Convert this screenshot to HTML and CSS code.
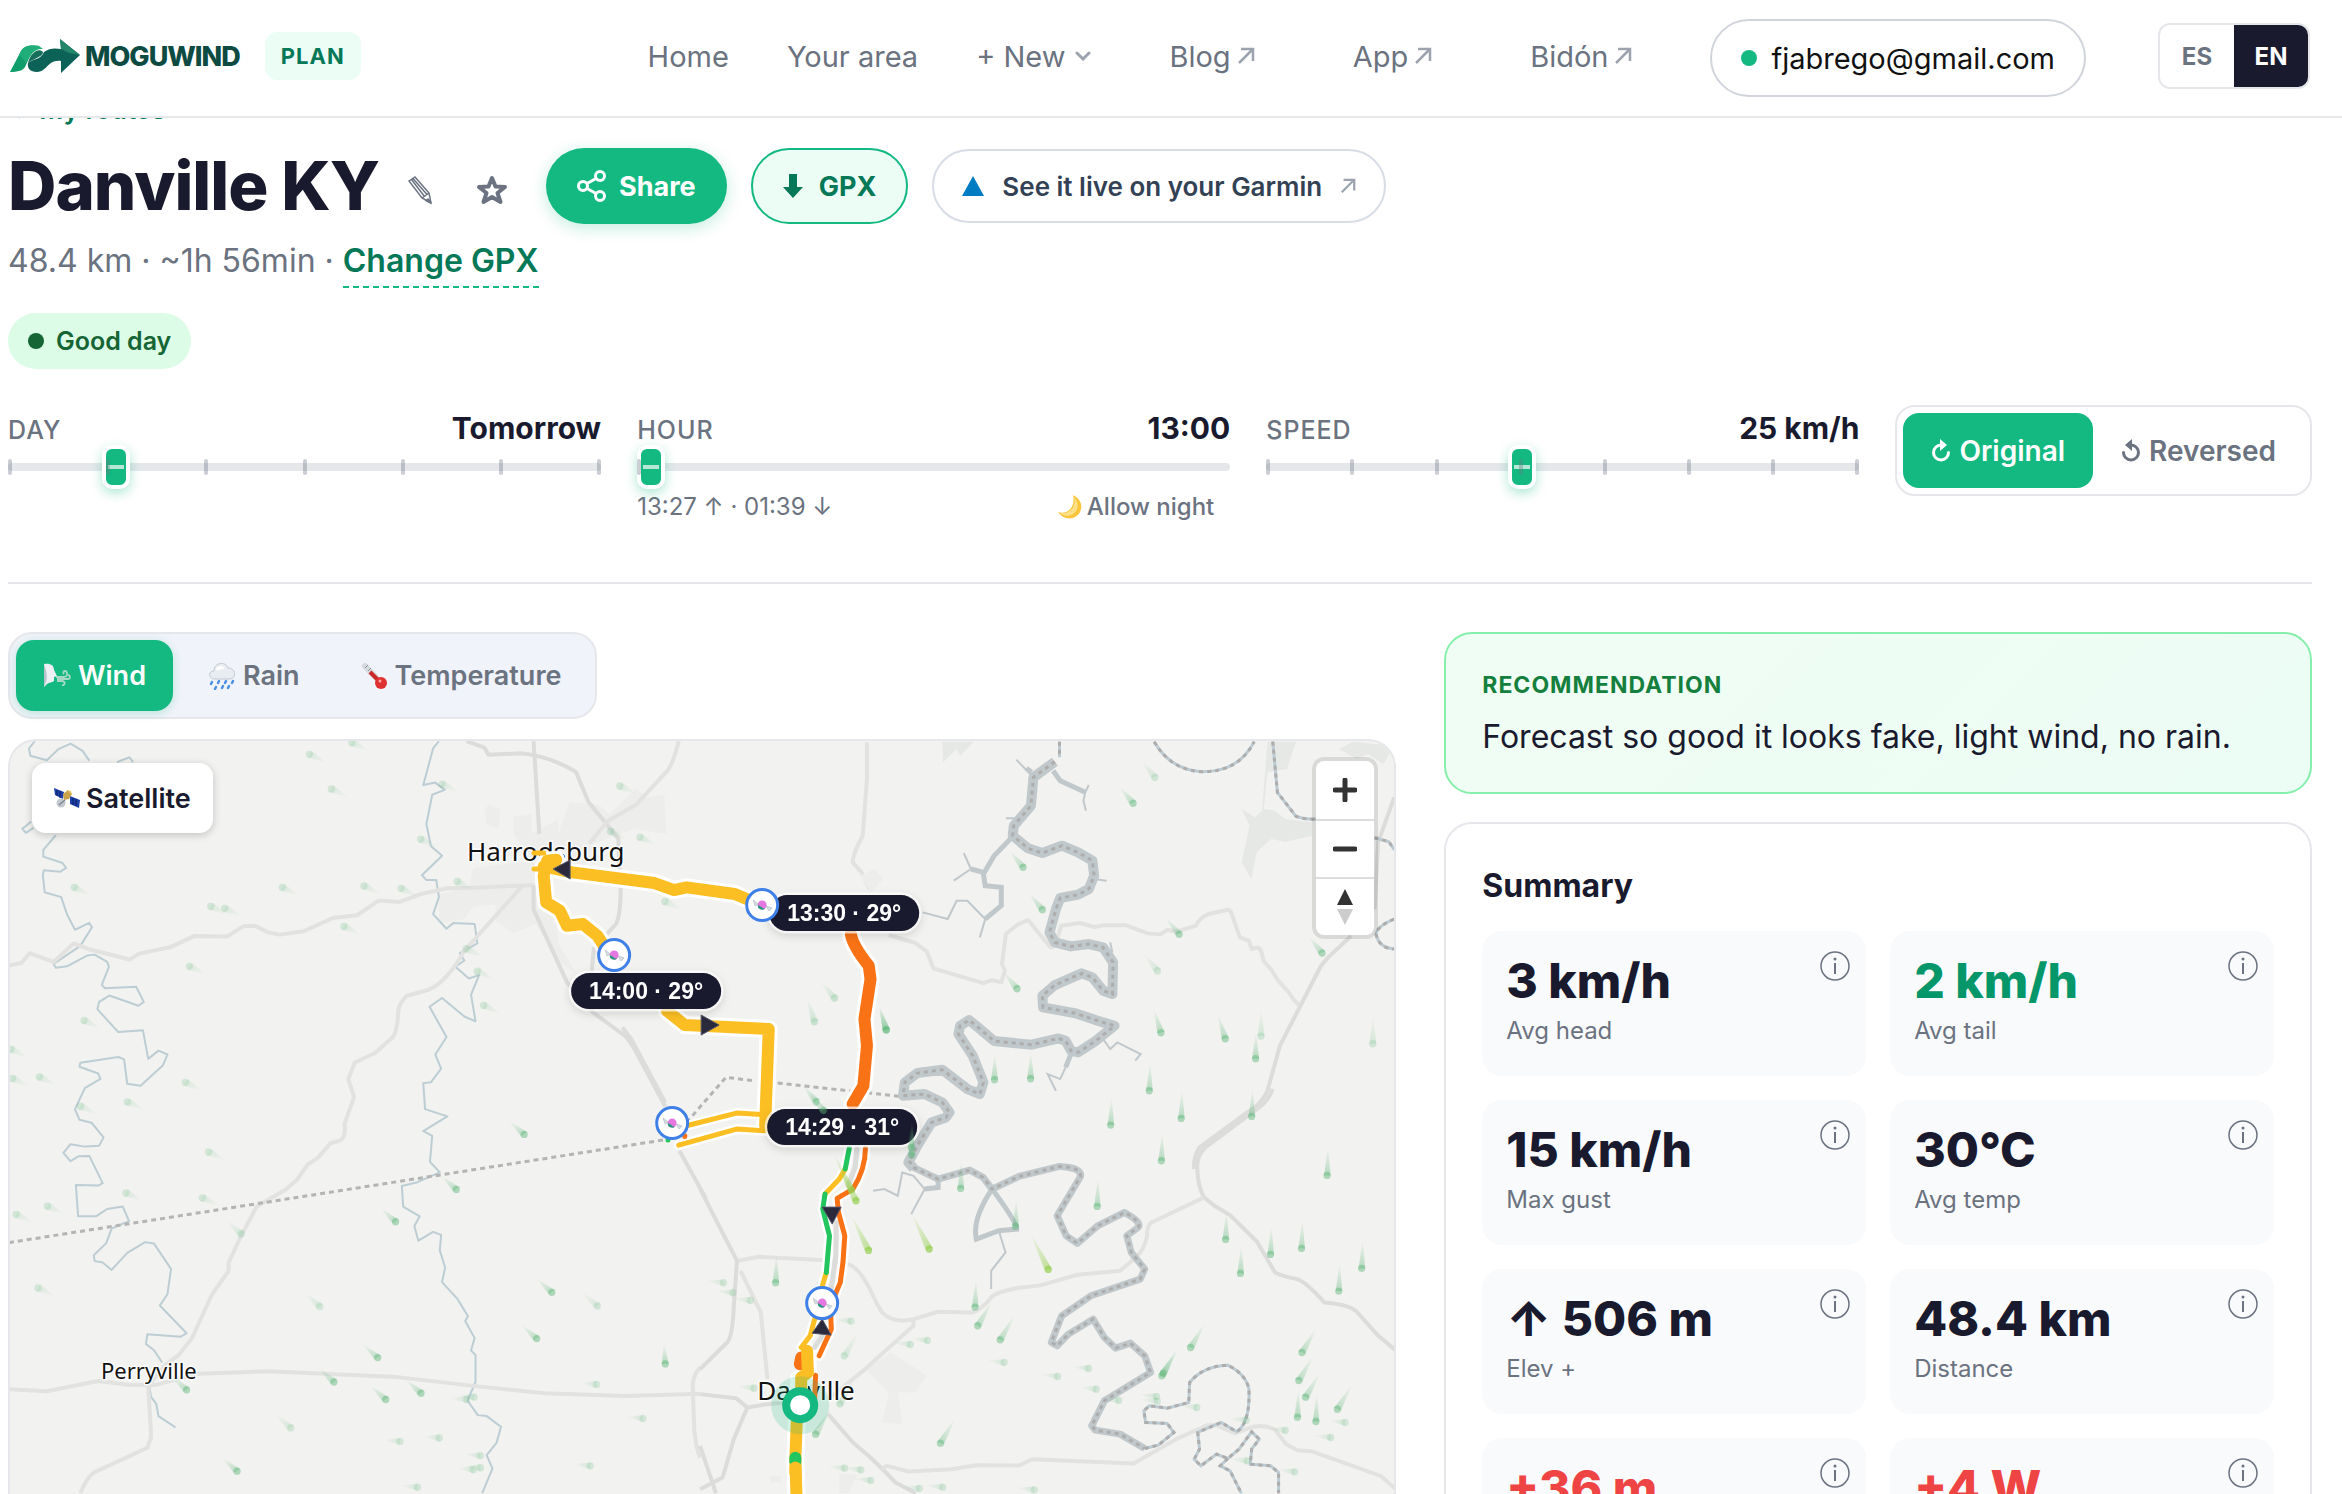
FILE: index.html
```html
<!DOCTYPE html>
<html lang="en">
<head>
<meta charset="utf-8">
<title>Danville KY - Moguwind Plan</title>
<link rel="stylesheet" href="styles.css">
</head>
<body>
<svg class="defs" aria-hidden="true">
  <symbol id="i-out" viewBox="0 0 18 18"><path d="M2 16 16 2M4 2h12v12" fill="none" stroke="currentColor" stroke-width="2.500"/></symbol>
  <symbol id="i-info" viewBox="0 0 30 30"><circle cx="15" cy="15" r="14" fill="none" stroke="currentColor" stroke-width="1.500"/><circle cx="15" cy="8" r="1.500" fill="currentColor"/><path d="M15 12v11" fill="none" stroke="currentColor" stroke-width="2"/></symbol>
</svg>

<header class="topbar">
  <a class="brand" href="#">
    <svg class="brand-mark" viewBox="0 0 70 34" aria-hidden="true">
      <path d="M0 33 11 12C14 7 18 6 30 7 22 9 20 17 16 26 14 31 10 33 0 33Z" fill="#0f9d6b"/>
      <path d="M11 12C14 7 20 5 29 7l4 3C24 9 21 16 16 24 12 18 10 17 9 16Z" fill="#1fae79"/>
      <path d="M18 24C20 15 28 8 33 13 33 18 24 19 18 24Z" fill="#176f5b"/>
      <path d="M18 24C22 20 31 21 34 13 39 9 45 9 51 10L50 0 70 16 51 34 51 22C38 20 37 33 27 33 20 33 17 29 18 24Z" fill="#0c6257"/>
      <path d="M50 0 70 16 59 14 51 10Z" fill="#23866a"/>
    </svg>
    <span class="brand-name">MOGUWIND</span>
  </a>
  <span class="chip">PLAN</span>
  <nav class="nav">
    <a href="#">Home</a>
    <a href="#">Your area</a>
    <a href="#" class="with-icon menu">+ New <svg viewBox="0 0 16 10" width="16" height="10"><path d="M2 2l6 6 6-6" fill="none" stroke="#9ca3af" stroke-width="3" stroke-linecap="round"/></svg></a>
    <a href="#" class="with-icon ext">Blog<svg width="18" height="18"><use href="#i-out"/></svg></a>
    <a href="#" class="with-icon ext">App<svg width="18" height="18"><use href="#i-out"/></svg></a>
    <a href="#" class="with-icon ext">Bidón<svg width="18" height="18"><use href="#i-out"/></svg></a>
    <button class="account" type="button"><span class="dot"></span>fjabrego@gmail.com</button>
  </nav>
  <div class="lang"><button type="button">ES</button><button type="button" class="on">EN</button></div>
</header>

<main class="page">
  <a class="back" href="#">← My routes</a>
  <div class="title-row">
    <h1>Danville KY</h1>
    <button class="icon-btn" type="button" aria-label="Rename"><svg viewBox="0 0 26 30" width="26" height="30" fill="none" stroke="#6b7280" stroke-width="1.5"><path d="M2 6 8 2 22 18 24 28 15 23ZM15 23 22 18M4.500 4.500 17.500 21.500M6 3.500 20 19.500"/><path d="M21 24 24 28 19 25.500Z" fill="#6b7280"/></svg></button>
    <button class="icon-btn star" type="button" aria-label="Favourite"><svg viewBox="0 0 34 32" width="34" height="32"><path d="M17 4 20.500 12.500 30 13 22.500 19 25.500 28 17 23 8.500 28 11.500 19 4 13 13.500 12.500Z" fill="none" stroke="#6b7280" stroke-width="4" stroke-linejoin="round"/></svg></button>
    <button class="btn share" type="button"><svg viewBox="0 0 30 32" width="30" height="32" fill="none" stroke="#fff" stroke-width="3"><circle cx="23" cy="6" r="4.500"/><circle cx="6" cy="16" r="4.500"/><circle cx="23" cy="26" r="4.500"/><path d="M10 13.500 19 8.500M10 18.500 19 23.500"/></svg>Share</button>
    <button class="btn gpx" type="button"><svg viewBox="0 0 20 26" width="20" height="26"><path d="M6 1h8v13h6L10 25 0 14h6Z" fill="#047857"/></svg>GPX</button>
    <a class="btn garmin" href="#"><svg viewBox="0 0 22 20" width="22" height="20"><path d="M11 0 22 20H0Z" fill="#007cc3"/></svg>See it live on your Garmin<svg class="out" width="16" height="16"><use href="#i-out"/></svg></a>
  </div>
  <p class="sub">48.4 km · ~1h 56min · <a href="#">Change GPX</a></p>
  <p class="verdict"><span class="dot"></span>Good day</p>

  <section class="controls">
    <div class="control">
      <div class="control-head"><label for="day">DAY</label><output>Tomorrow</output></div>
      <div class="slider"><input id="day" type="range" min="0" max="6" value="1"><div class="ticks"><i></i><i></i><i></i><i></i><i></i><i></i><i></i></div></div>
    </div>
    <div class="control">
      <div class="control-head"><label for="hour">HOUR</label><output>13:00</output></div>
      <div class="slider"><input id="hour" type="range" min="13" max="25" value="13"><div class="ticks"><i></i></div></div>
      <div class="control-foot"><span>13:27 ↑ · 01:39 ↓</span><button type="button"><svg viewBox="0 0 26 26" width="26" height="26"><path d="M16 1C24 5 26 12 23 18 19 26 7 27 1 18 9 21 19 15 16 1Z" fill="#fbc53a"/><path d="M17 3C22 8 22 16 16 20 11 23 6 22 3 19 11 21 20 14 17 3Z" fill="#fde08a"/></svg>Allow night</button></div>
    </div>
    <div class="control">
      <div class="control-head"><label for="speed">SPEED</label><output>25 km/h</output></div>
      <div class="slider"><input id="speed" type="range" min="0" max="7" value="3"><div class="ticks"><i></i><i></i><i></i><i></i><i></i><i></i><i></i><i></i></div></div>
    </div>
    <div class="direction">
      <button type="button" class="on"><svg viewBox="0 0 20 24" width="20" height="24"><path d="M17.500 13.500A7.500 7.500 0 1 1 10 6" fill="none" stroke="currentColor" stroke-width="3" stroke-linecap="round"/><path d="M9 0 16 6 9 12Z" fill="currentColor"/></svg>Original</button>
      <button type="button"><svg viewBox="0 0 20 24" width="20" height="24"><path d="M2.500 13.500A7.500 7.500 0 1 0 10 6" fill="none" stroke="currentColor" stroke-width="3" stroke-linecap="round"/><path d="M11 0 4 6 11 12Z" fill="currentColor"/></svg>Reversed</button>
    </div>
  </section>

  <div class="columns">
    <section class="map-col">
      <div class="tabs">
        <button type="button" class="on"><svg viewBox="0 0 28 28" width="28" height="28"><path d="M1 2C7 1 11 3 11 8L14 14 11 15V19C9 21 6 20 4 22L1 25Z" fill="#eef1f4"/><path d="M1 2C3 8 5 14 3 20L1 25Z" fill="#b9c3cc"/><path d="M13 15H21C25 15 25 9 22 9 20 9 20 11 21 12M14 17H25C28 17 27 13 25 13M14 19H19C23 19 22 24 19 23" fill="none" stroke="#a5d8c5" stroke-width="1.800"/></svg>Wind</button>
        <button type="button"><svg viewBox="0 0 28 28" width="28" height="28"><path d="M7 17C0 17 0 9 6 9 6 0 18-1 20 6 28 6 29 17 21 17Z" fill="#e9ecf0" stroke="#c3c9d1"/><path d="M8 8C9 3 15 3 17 7 12 6 12 9 8 8Z" fill="#fff"/><path d="M4 20l-1 2M11 19l-1 2M18 19l-1 2M25 19l-1 2M8 25l-1 2M15 24l-1 2M21 24l-1 2" stroke="#4a90e2" stroke-width="2.500" stroke-linecap="round"/></svg>Rain</button>
        <button type="button"><svg viewBox="0 0 26 28" width="26" height="28"><path d="M3 4 17 19" stroke="#d5dade" stroke-width="6" stroke-linecap="round"/><path d="M3 6 6 3M6 9 9 6" stroke="#8b939b"/><path d="M8 10 19 21" stroke="#c92a2a" stroke-width="4"/><circle cx="19" cy="21" r="6" fill="#e03131"/><circle cx="18" cy="19" r="1.500" fill="#ffa8a8"/></svg>Temperature</button>
      </div>

      <div class="map">
        <svg class="map-art" viewBox="10 742 1384 860" preserveAspectRatio="xMidYMin slice">
          <defs>
            <linearGradient id="t-up" x1="0" y1="1" x2="0" y2="0"><stop offset="0" stop-color="#5cb578" stop-opacity=".4"/><stop offset="1" stop-color="#5cb578" stop-opacity="0"/></linearGradient>
            <linearGradient id="t-nw" x1="1" y1="1" x2="0" y2="0"><stop offset="0" stop-color="#5cb578" stop-opacity=".4"/><stop offset="1" stop-color="#5cb578" stop-opacity="0"/></linearGradient>
            <linearGradient id="t-ne" x1="0" y1="1" x2="1" y2="0"><stop offset="0" stop-color="#5cb578" stop-opacity=".4"/><stop offset="1" stop-color="#5cb578" stop-opacity="0"/></linearGradient>
            <linearGradient id="t-se" x1="0" y1="0" x2="1" y2="1"><stop offset="0" stop-color="#5cb578" stop-opacity=".4"/><stop offset="1" stop-color="#5cb578" stop-opacity="0"/></linearGradient>
            <linearGradient id="t-w" x1="1" y1="0" x2="0" y2="0"><stop offset="0" stop-color="#5cb578" stop-opacity=".4"/><stop offset="1" stop-color="#5cb578" stop-opacity="0"/></linearGradient>
            <linearGradient id="t-lime" x1="1" y1="1" x2="0" y2="0"><stop offset="0" stop-color="#95cf4e" stop-opacity=".6"/><stop offset="1" stop-color="#95cf4e" stop-opacity="0"/></linearGradient>
            <g id="w-se" opacity=".45"><path d="M-4 7 38 17 5-7Z" fill="url(#t-se)"/><ellipse rx="8" ry="7.500" class="g"/></g>
            <g id="w-nw"><path d="M-7 4-34-28 6-5Z" fill="url(#t-nw)"/><ellipse rx="8" ry="7.500" class="g"/></g>
            <g id="w-n"><path d="M-8 0-3-42 8 0Z" fill="url(#t-up)"/><ellipse rx="8" ry="7.500" class="g"/></g>
            <g id="w-w" opacity=".45"><path d="M0 7-36-3 0-7Z" fill="url(#t-w)"/><ellipse rx="8" ry="7.500" class="g"/></g>
            <g id="s-n"><path d="M-7 0 2-85 8 0Z" fill="url(#t-up)"/><ellipse rx="8" ry="11" class="g"/></g>
            <g id="s-ne"><path d="M-7-4 33-75 8 4Z" fill="url(#t-ne)"/><ellipse rx="8" ry="11" class="g"/></g>
            <g id="s-w" opacity=".45"><path d="M0 10-38-6 0-10Z" fill="url(#t-w)"/><ellipse rx="8" ry="11" class="g"/></g>
            <g id="s-lime"><path d="M-8 2-40-110 8-3Z" fill="url(#t-lime)"/><ellipse rx="8" ry="11" fill="#95cf4e" opacity=".7"/></g>
            <g id="e-nw"><path d="M-10 3-38-50 9-6Z" fill="url(#t-nw)"/><ellipse rx="10" ry="11" class="g"/></g>
            <g id="e-nnw"><path d="M-10 2-20-72 10-3Z" fill="url(#t-up)"/><ellipse rx="10" ry="11" class="g"/></g>
            <g id="e-n"><path d="M-10 0 1-80 10 0Z" fill="url(#t-up)"/><ellipse rx="10" ry="11" class="g"/></g>
            <g id="candy"><circle r="15.500" fill="#fff" stroke="#3f7fe8" stroke-width="3"/><path d="M-4-1-9-5-7 1ZM4 1 10 3 7 6Z" fill="#d6dde0" stroke="#c2cbd0"/><circle r="4.500" fill="#e478e0"/><path d="M-4.500 0A4.500 4.500 0 0 0 3 3.500C0 4-1 1-4.500 0Z" fill="#1f9a78"/></g>
          </defs>

          <g transform="translate(0 730) scale(.4464 .4872)">
            <g class="urban"><path d="M1085 165 1095 155 1120 165 1118 205 1090 195ZM1150 180 1190 175 1190 215 1250 185V215L1275 150 1340 155 1365 175 1425 122 1450 140 1488 135 1492 215 1420 205 1330 235 1300 300 1210 290 1150 215ZM1060 285 1200 270 1240 330 1250 440 1290 500 1255 480 1200 400 1150 418 1110 395 1110 360 1060 365 1040 390 985 400 980 340 1050 325Z"/></g>
            <g class="creek">
              <path d="M78 25 65 40 68 55 105 64 130 42 158 30 185 45 200 65M262 68 290 58 298 68M70 190 50 205 58 213 75 203M125 218 97 248V262L140 275 148 285 135 293 98 290 96 300 100 335 137 345 150 380 168 412 200 398 206 407 180 445 120 482 125 490 150 487 195 465 212 463 240 478 244 488 228 525 235 532 305 529 322 560 310 568 245 547 222 560 218 575 265 622 320 618 332 677 355 660 375 668 365 690 315 732 285 728 278 678 265 673 180 685 178 693 220 707 225 718 190 737 168 780 178 802 205 808 232 838 222 855 190 857 158 852 142 870 158 887 175 877 200 876 230 932 220 937 170 936 175 1000 215 1000 240 985 275 980 289 1010 250 1025 238 1055 210 1080 212 1092 230 1095 250 1110 285 1075 325 1053 345 1056 383 1108 375 1160 358 1183 418 1240 405 1247 330 1242 327 1262 345 1275 363 1300M335 1350 338 1370 350 1385 355 1410 393 1433"/>
              <path d="M983 25 970 40 948 115 975 110 996 125 968 135 955 195 965 240 990 260 945 300 955 310 977 310 983 345 970 380 1000 410 1015 398 1063 400 1069 440 1030 460 1040 475 1020 488 1050 512 1073 505 1055 545 1065 600 1040 590 990 552 962 570 1000 632 975 668 988 697 965 725 948 727 952 780 1002 795 948 825 968 835 963 888 985 910 935 930 900 938 903 980 940 1000 928 1020 937 1050 970 1032 988 1038 985 1070 997 1105 990 1135 1025 1170 1048 1205 1042 1215 1063 1250 1055 1275 1065 1285V1340L1047 1378 1070 1408 1090 1410 1122 1432 1112 1465 1090 1490 1103 1518 1080 1568"/>
            </g>
            <g class="road">
              <path d="M20 485 48 480 66 460 120 478 165 440 200 452 290 473 312 461 380 448 435 425 508 426 545 405 572 404 600 417 626 422 680 415 745 388 800 382 848 352 895 355 945 338 1000 327 1060 326 1195 320"/>
              <path d="M1170 322 1040 455Q1000 520 960 535L910 548Q892 565 892 580 890 620 880 632L840 665 795 684 780 718 793 755 772 810Q775 840 760 845L740 850 712 880 690 893 665 925 640 945 575 980 540 1040 512 1095V1112L475 1160 430 1250 400 1285 370 1305 335 1345"/>
              <path d="M20 1355 105 1359 220 1338 290 1346H350L440 1323 600 1318 890 1330 1060 1348 1220 1363 1400 1369 1568 1364"/>
              <path d="M332 1350 338 1440V1455L330 1475 210 1526Q195 1535 180 1568"/>
              <path class="main" d="M1195 25 1208 215M1195 320V370L1270 520 1330 583 1400 630Q1410 640 1420 655L1490 775"/>
              <path class="main" d="M1045 25 1085 38 1094 53 1165 50Q1230 55 1290 88L1318 150 1385 225V240L1390 330Q1390 380 1380 400L1330 450 1325 500"/>
              <path d="M1520 25Q1505 80 1490 90L1425 155 1360 190 1320 235"/>
              <path d="M1568 1310Q1548 1330 1552 1360L1555 1440Q1560 1480 1568 1495"/>
            </g>
            <path class="border" d="M20 1054 1495 842"/>
          </g>

          <g transform="translate(440 780) scale(.35714 .33333)">
            <g class="road">
              <path d="M1195-110V0L1183 170Q1155 225 1155 250L1180 280 1202 330"/>
              <path class="main" d="M510 745 535 780 630 970M670 1115 745 1260"/>
            </g>
            <path class="border" d="M690 1030 800 895 880 905M945 912 1290 952"/>
          </g>

          <g transform="translate(860 730) scale(.35714 .33333)">
            <g class="park"><path d="M1140 38H1220L1195 120 1140 130 1130 240 1160 245 1190 270 1265 280V320L1190 338 1150 330 1110 370 1095 450 1068 400 1090 290 1068 240 1105 265 1125 245ZM1340 60 1380 38 1495 50 1465 105 1420 75 1390 90ZM230 38H318L280 80 270 60 232 100Z"/></g>
            <g class="urban"><path d="M0 440 40 420 65 450 30 490Z"/></g>
            <g class="road">
              <path d="M80 618 155 642 187 668 205 718 345 762 368 753 395 760 405 725 397 705 408 615 440 587 470 573 533 655 548 648 562 590 615 582 655 594 680 589H745L805 613 840 616 860 602 885 608 940 590Q950 565 975 555L1030 542Q1038 545 1040 555L1063 625 1088 635 1096 660 1115 655 1122 665 1130 697 1150 720 1170 755 1200 790Q1210 810 1228 828"/>
              <path class="main" d="M1495 205 1450 340 1440 540M1375 620 1310 685 1290 710 1175 950 1140 1085Q1130 1110 1105 1135L1070 1160 950 1255Q932 1285 935 1320"/>
            </g>
            <g class="arm">
              <path d="M540 125 560 155 630 190M480 130 465 118M425 325 375 380 345 435 350 470 395 475V530L350 570M345 430 310 420 M590 975 575 1015"/>
            </g>
            <g class="arm thin">
              <path d="M630 190 625 215 632 245M630 190 640 168M485 145 437 92M350 570 335 625M350 570 300 515H270L245 570 175 550M310 420 262 455M310 420 290 372M680 930 700 960 720 940 785 975 770 995M575 1015 560 1050 525 1035 548 1085M655 450 690 455M430 268H408M706 670 700 640"/>
            </g>
            <path class="river" d="M545 98 485 145 478 230 430 290 427 320 470 358 510 372 565 350 610 370 650 395 655 440 640 480 610 497 560 507 548 540 530 610 545 640 590 652 640 645 680 655 708 700 706 795 680 785 650 745 620 733 545 768 510 800 512 835 600 852 680 880 712 890 660 935 610 970 590 965 575 935 555 928 480 947 375 936 330 895 305 873 280 890 275 915 315 980 345 1060 335 1095 300 1080 230 1022 160 1032 125 1060 120 1100 180 1095 230 1120 250 1150 240 1165 200 1180 160 1250 135 1300 150 1318"/>
            <path class="river-mid" d="M545 98 485 145 478 230 430 290 427 320 470 358 510 372 565 350 610 370 650 395 655 440 640 480 610 497 560 507 548 540 530 610 545 640 590 652 640 645 680 655 708 700 706 795 680 785 650 745 620 733 545 768 510 800 512 835 600 852 680 880 712 890 660 935 610 970 590 965 575 935 555 928 480 947 375 936 330 895 305 873 280 890 275 915 315 980 345 1060 335 1095 300 1080 230 1022 160 1032 125 1060 120 1100 180 1095 230 1120 250 1150 240 1165 200 1180 160 1250 135 1300 150 1318"/>
            <path class="brook" d="M558 38V85M823 38Q870 125 960 128 1060 128 1103 38M1155 38 1168 190 1220 262Q1245 272 1276 270M1440 326 1480 338 1495 362M1495 570Q1440 595 1445 620 1455 658 1495 660"/>
            <path class="river-mid" d="M558 38V85M823 38Q870 125 960 128 1060 128 1103 38M1155 38 1168 190 1220 262Q1245 272 1276 270M1440 326 1480 338 1495 362M1495 570Q1440 595 1445 620 1455 658 1495 660"/>
          </g>

          <g transform="translate(700 1090) scale(.449 .33333)">
            <g class="urban"><path d="M370 840 425 790 505 860 480 910 440 910 450 1005 405 1000 420 910ZM155 1160H180V1180H155ZM310 1155H350L330 1212H310Z"/></g>
            <g class="road">
              <path class="main" d="M1275 0Q1265 35 1245 55L1125 175Q1105 200 1107 240 1108 290 1122 325L1145 350 1180 378 1240 458 1280 550Q1290 560 1330 570 1350 580 1390 640 1440 645 1460 665L1510 740 1559 795"/>
              <path d="M1122 325 1005 400Q995 410 995 440 990 480 970 505L935 545 840 557 760 588 700 598Q660 610 650 622 625 665 605 670L530 668 475 690Q430 705 405 670 395 650 385 620 360 545 335 528L300 515 130 503 85 515"/>
              <path class="main" d="M0 300 82 515 75 650Q72 745 60 760L0 840M0 915 80 927 105 955 150 945 225 935M105 955 75 1050 50 1165 0 1200M0 1070 35 1212"/>
              <path d="M90 545 135 670 150 870M475 690V710L400 800Q370 840 340 870L285 930"/>
              <path class="main" d="M285 975 340 1060 375 1100 410 1145 435 1180 480 1212"/>
              <path d="M405 1140 415 1130 465 1147 560 1140 615 1128 710 1129 740 1110 965 1123 1060 1050 1130 1008H1150L1190 1033 1215 1020Q1250 1000 1280 1022L1305 1065 1330 1083 1360 1086 1400 1105 1515 1160 1559 1212"/>
            </g>
            <path class="arm" d="M650 300Q605 390 615 450L665 425 705 420Q705 400 650 300M530 270V295L500 300"/>
            <path class="arm thin" d="M665 425 680 490 648 545V600M500 300 470 375M500 300 475 260 450 250 440 320 410 300 385 305"/>
            <path class="river slim" d="M465 215 475 235 530 270 600 243 630 265 650 300 710 262 800 232Q850 235 847 262L795 380 815 440 840 463 885 410 945 370Q985 400 975 415L950 440 960 490 990 540 980 570 870 620 805 680 782 760 795 770 820 735 875 690 900 745 925 777 958 762 990 800 1003 850 900 935 872 1010 880 1023 935 1035 990 1078"/>
            <path class="river-mid" d="M465 215 475 235 530 270 600 243 630 265 650 300 710 262 800 232Q850 235 847 262L795 380 815 440 840 463 885 410 945 370Q985 400 975 415L950 440 960 490 990 540 980 570 870 620 805 680 782 760 795 770 820 735 875 690 900 745 925 777 958 762 990 800 1003 850 900 935 872 1010 880 1023 935 1035 990 1078"/>
            <path class="brook" d="M990 1078 1020 1068 1055 1030 1040 1003 992 1000 988 965 1000 950 1040 957 1088 940 1090 880Q1120 830 1175 828 1215 855 1222 900 1225 1000 1195 1028L1160 1000 1108 1030 1112 1080 1100 1110 1115 1130 1150 1095 1175 1108 1200 1080 1228 1028 1245 1050 1228 1080 1225 1125 1270 1130 1288 1150V1212M1175 1108 1158 1130 1180 1145 1205 1212"/>
            <path class="river-mid" d="M990 1078 1020 1068 1055 1030 1040 1003 992 1000 988 965 1000 950 1040 957 1088 940 1090 880Q1120 830 1175 828 1215 855 1222 900 1225 1000 1195 1028L1160 1000 1108 1030 1112 1080 1100 1110 1115 1130 1150 1095 1175 1108 1200 1080 1228 1028 1245 1050 1228 1080 1225 1125 1270 1130 1288 1150V1212M1175 1108 1158 1130 1180 1145 1205 1212"/>
          </g>

          <g class="place">
            <text x="467" y="862" font-size="26">Harrodsburg</text>
            <text x="101" y="1380" font-size="22">Perryville</text>
            <text x="757" y="1401" font-size="26">Danville</text>
          </g>

          <g transform="translate(440 780) scale(.35714 .33333)" class="route">
            <path class="case wide" d="M870 365 825 345 690 325 655 333 600 312 370 280 290 262M325 242 300 245 290 290 297 370 335 395 355 440 400 435 440 470 465 510M635 695 685 738 920 750 910 1040M1150 465Q1155 500 1200 560L1205 600 1188 720 1195 800 1185 920 1155 975"/>
            <path class="case narrow" d="M690 1040 830 1002 900 1006M668 1098 830 1050 910 1055"/>
            <path class="narrow y" d="M263 222H290M263 270H285M690 1040 830 1002 900 1006M668 1098 830 1050 910 1055"/>
            <path class="wide y" d="M870 365 825 345 690 325 655 333 600 312 370 280 290 262M325 242 300 245 290 290 297 370 335 395 355 440 400 435 440 470 465 510M635 695 685 738 920 750 910 1040"/>
            <path class="wide o" d="M1150 465Q1155 500 1200 560L1205 600 1188 720 1195 800 1185 920 1155 975"/>
            <path class="narrow g2" d="M638 1082V1083"/><path class="narrow o" d="M685 1070V1072"/>
          </g>
          <g transform="translate(700 1090) scale(.449 .33333)" class="route">
            <path class="case narrow" d="M332 178 323 240 310 270 278 315 273 360 288 440 281 550 270 600 255 690 245 740 225 775M368 178Q368 240 340 300L305 328 308 370 322 440 318 520 312 580 290 650 292 720 265 800"/>
            <path class="case wide" d="M238 785 240 860 220 870V940M215 1000 212 1110 215 1240"/>
            <path class="narrow grey" d="M349 180 345 235 330 290M303 400 302 500 292 600M272 740 255 775"/>
            <path class="narrow y" d="M323 240 310 270 278 315M281 550 270 600 255 690 245 740 225 775"/>
            <path class="narrow g2" d="M332 178 323 240M278 315 273 360 288 440 281 550"/>
            <path class="narrow o" d="M368 178Q368 240 340 300L305 328 308 370 322 440 318 520 312 580 290 650 292 720 265 800M257 858 255 930"/>
            <path class="wide o" d="M225 805 222 825"/>
            <path class="wide y" d="M238 785 240 850 225 865V940M215 1000 212 1110 215 1240"/>
            <path class="wide g2" d="M212 1106V1116"/><path class="wide y" d="M212 1135V1150"/>
          </g>

          <g transform="translate(0 730) scale(.4464 .4872)">
            <use href="#w-se" x="693" y="52"/><use href="#w-se" x="788" y="28"/><use href="#w-se" x="742" y="123"/><use href="#w-se" x="990" y="113"/><use href="#w-se" x="1388" y="117"/><use href="#w-se" x="942" y="226"/><use href="#w-se" x="1367" y="210"/><use href="#w-se" x="1433" y="222"/><use href="#w-se" x="166" y="325"/><use href="#w-se" x="632" y="325"/><use href="#w-se" x="815" y="322"/><use href="#w-se" x="898" y="327"/><use href="#w-se" x="1024" y="313"/><use href="#w-se" x="472" y="364"/><use href="#w-se" x="503" y="368"/><use href="#w-se" x="770" y="405"/><use href="#w-se" x="1489" y="354"/><use href="#w-se" x="424" y="487"/><use href="#w-se" x="1044" y="451"/><use href="#w-se" x="1069" y="497"/><use href="#w-se" x="1083" y="567"/><use href="#w-se" x="188" y="598"/><use href="#w-se" x="24" y="657"/><use href="#w-se" x="28" y="717"/><use href="#w-se" x="88" y="714"/><use href="#w-se" x="415" y="725"/><use href="#w-se" x="180" y="774"/><use href="#w-se" x="285" y="765"/><use href="#w-se" x="467" y="868"/><use href="#w-se" x="282" y="952"/><use href="#w-se" x="453" y="962"/><use href="#w-se" x="106" y="979"/><use href="#w-se" x="36" y="996"/><use href="#w-se" x="85" y="1147"/>
            <use href="#w-nw" x="1174" y="832"/><use href="#w-nw" x="1022" y="945"/><use href="#w-nw" x="886" y="1011"/><use href="#w-nw" x="1236" y="1156"/><use href="#w-nw" x="1202" y="1251"/><use href="#w-nw" x="846" y="1290"/><use href="#w-nw" x="748" y="1340"/><use href="#w-nw" x="418" y="1356"/><use href="#w-nw" x="864" y="1376"/><use href="#w-nw" x="943" y="1363"/><use href="#w-nw" x="531" y="1523"/>
            <g opacity=".5"><use href="#w-nw" x="540" y="1036"/><use href="#w-nw" x="716" y="1185"/><use href="#w-nw" x="1338" y="1184"/><use href="#w-nw" x="651" y="1434"/></g>
            <use href="#w-n" x="1490" y="1303"/>
            <use href="#w-w" x="1336" y="1345"/><use href="#w-w" x="1062" y="1371"/><use href="#w-w" x="1045" y="1376"/><use href="#w-w" x="1440" y="1415"/><use href="#w-w" x="896" y="1462"/><use href="#w-w" x="984" y="1455"/><use href="#w-w" x="1076" y="1491"/><use href="#w-w" x="1076" y="1516"/><use href="#w-w" x="1060" y="1520"/><use href="#w-w" x="1322" y="1512"/><use href="#w-w" x="935" y="1556"/>
          </g>
          <g transform="translate(860 730) scale(.35714 .33333)">
            <use href="#e-nw" x="825" y="145" opacity=".5"/><use href="#e-nw" x="764" y="223"/><use href="#e-nw" x="456" y="415"/><use href="#e-nw" x="510" y="542"/><use href="#e-nw" x="893" y="616"/><use href="#e-nw" x="1293" y="672"/><use href="#e-nw" x="832" y="725" opacity=".5"/><use href="#e-nw" x="439" y="779"/><use href="#e-nnw" x="73" y="903"/><use href="#e-nnw" x="842" y="911"/><use href="#e-nnw" x="1022" y="929"/><use href="#e-n" x="1122" y="921" opacity=".5"/><use href="#e-n" x="1107" y="989"/><use href="#e-n" x="1435" y="944" opacity=".5"/><use href="#e-n" x="376" y="1052"/><use href="#e-n" x="477" y="1049"/>
          </g>

          <g class="arrow">
            <path d="M553 870 570 861V880ZM719 1026 701 1016V1036ZM832 1225 822 1208H841ZM822 1320 831 1336 812 1334Z"/>
          </g>
          <g class="pill">
            <rect x="769" y="896" width="150" height="36" rx="18"/><text x="844" y="922">13:30 · 29°</text>
            <rect x="571" y="974" width="150" height="36" rx="18"/><text x="646" y="1000">14:00 · 29°</text>
            <rect x="767" y="1110" width="150" height="36" rx="18"/><text x="842" y="1136">14:29 · 31°</text>
          </g>
          <use href="#candy" x="762" y="906"/><use href="#candy" x="614" y="956"/><use href="#candy" x="672" y="1124"/><use href="#candy" x="822" y="1304"/>
          <circle cx="800" cy="1406" r="29" fill="#14b982" opacity=".18"/>
          <circle cx="800" cy="1406" r="14" fill="#fff" stroke="#14b982" stroke-width="8"/>

          <g transform="translate(700 1090) scale(.449 .33333)">
            <use href="#s-n" x="914" y="108"/><use href="#s-n" x="1000" y="5"/><use href="#s-n" x="1071" y="88"/><use href="#s-n" x="1228" y="82"/><use href="#s-n" x="1027" y="215"/><use href="#s-n" x="1396" y="259"/><use href="#s-n" x="580" y="298"/><use href="#s-n" x="884" y="352"/><use href="#s-n" x="702" y="412"/><use href="#s-n" x="1170" y="451"/><use href="#s-n" x="1203" y="553"/><use href="#s-n" x="1270" y="496"/><use href="#s-n" x="1339" y="478"/><use href="#s-n" x="1473" y="538"/><use href="#s-n" x="1422" y="606"/><use href="#s-n" x="168" y="581"/><use href="#s-n" x="612" y="654"/><use href="#s-n" x="1330" y="984"/><use href="#s-n" x="1371" y="997"/><use href="#s-n" x="470" y="176"/><use href="#s-n" x="471" y="198"/>
            <use href="#s-lime" x="347" y="335"/><use href="#s-lime" x="337" y="303"/><use href="#s-lime" x="375" y="484"/><use href="#s-lime" x="510" y="480"/><use href="#s-lime" x="775" y="541"/>
            <use href="#s-ne" x="618" y="710"/><use href="#s-ne" x="668" y="752"/><use href="#s-ne" x="1092" y="775"/><use href="#s-ne" x="1028" y="860"/><use href="#s-ne" x="1031" y="852"/><use href="#s-ne" x="1340" y="790"/><use href="#s-ne" x="1333" y="874"/><use href="#s-ne" x="1348" y="924"/><use href="#s-ne" x="1419" y="960"/><use href="#s-ne" x="535" y="1062"/><use href="#s-ne" x="257" y="1035"/><use href="#s-ne" x="311" y="944" opacity=".6"/><use href="#s-ne" x="321" y="800" opacity=".5"/>
            <use href="#s-w" x="336" y="696"/><use href="#s-w" x="468" y="766"/><use href="#s-w" x="506" y="754"/><use href="#s-w" x="677" y="820"/><use href="#s-w" x="865" y="838"/><use href="#s-w" x="796" y="862"/><use href="#s-w" x="882" y="900"/><use href="#s-w" x="1016" y="922"/><use href="#s-w" x="1018" y="936"/><use href="#s-w" x="932" y="934"/><use href="#s-w" x="1106" y="955"/><use href="#s-w" x="1216" y="993"/><use href="#s-w" x="1303" y="1024"/><use href="#s-w" x="1436" y="1000"/><use href="#s-w" x="1404" y="1045"/><use href="#s-w" x="1218" y="1115"/><use href="#s-w" x="1324" y="1148"/><use href="#s-w" x="322" y="1137"/><use href="#s-w" x="358" y="1142"/><use href="#s-w" x="380" y="1174"/><use href="#s-w" x="488" y="1198"/><use href="#s-w" x="540" y="1194"/><use href="#s-w" x="744" y="1202"/><use href="#s-w" x="112" y="634"/><use href="#s-w" x="73" y="611"/><use href="#s-w" x="52" y="581"/><use href="#s-w" x="120" y="897"/>
          </g>
          <g transform="translate(440 780) scale(.35714 .33333)"><use href="#e-nw" x="1053" y="968"/><use href="#e-nw" x="1073" y="994"/><use href="#e-nnw" x="1249" y="752"/><use href="#e-nw" x="1104" y="657" opacity=".6"/><use href="#e-nnw" x="1048" y="728" opacity=".6"/></g>
        </svg>
        <button class="satellite" type="button"><svg viewBox="0 0 26 22" width="26" height="22"><path d="M0 1 10 5 9 12 1 8ZM16 9 26 13 25 21 16 17Z" fill="#1d3fa8"/><path d="M3 3 3 9M6 4 6 11M19 11V18M22 12V19" stroke="#0b1f66"/><path d="M9 7 14 3 18 7 15 12 10 13Z" fill="#c9a24a"/><path d="M13 3 17 4 18 8Z" fill="#e8c765"/><circle cx="7" cy="16" r="4.500" fill="#c4c9cf"/><path d="M5 18 11 13" stroke="#7d858d" stroke-width="1.500"/></svg>Satellite</button>
        <div class="zoom">
          <button type="button" aria-label="Zoom in"><svg viewBox="0 0 24 24" width="24" height="24"><path d="M12 2v20M2 12h20" stroke="#333" stroke-width="5" stroke-linecap="round"/></svg></button>
          <button type="button" aria-label="Zoom out"><svg viewBox="0 0 24 24" width="24" height="24"><path d="M2 12h20" stroke="#333" stroke-width="5" stroke-linecap="round"/></svg></button>
          <button type="button" aria-label="Reset bearing"><svg viewBox="0 0 16 36" width="16" height="36"><path d="M8 0 16 16H0Z" fill="#333"/><path d="M0 20H16L8 36Z" fill="#ccc"/></svg></button>
        </div>
      </div>
    </section>

    <aside class="side">
      <section class="card tip"><h2>RECOMMENDATION</h2><p>Forecast so good it looks fake, light wind, no rain.</p></section>
      <section class="card summary">
        <h2>Summary</h2>
        <div class="stats">
          <div class="stat"><strong>3 km/h</strong><span>Avg head</span><svg><use href="#i-info"/></svg></div>
          <div class="stat"><strong class="good">2 km/h</strong><span>Avg tail</span><svg><use href="#i-info"/></svg></div>
          <div class="stat"><strong>15 km/h</strong><span>Max gust</span><svg><use href="#i-info"/></svg></div>
          <div class="stat"><strong>30°C</strong><span>Avg temp</span><svg><use href="#i-info"/></svg></div>
          <div class="stat"><strong>↑ 506 m</strong><span>Elev +</span><svg><use href="#i-info"/></svg></div>
          <div class="stat"><strong>48.4 km</strong><span>Distance</span><svg><use href="#i-info"/></svg></div>
          <div class="stat"><strong class="bad">+36 m</strong><svg><use href="#i-info"/></svg></div>
          <div class="stat"><strong class="bad">+4 W</strong><svg><use href="#i-info"/></svg></div>
        </div>
      </section>
    </aside>
  </div>
</main>
</body>
</html>
```
FILE: styles.css
```css
* { box-sizing: border-box; }
:root {
  --ink: #1a1a2e;
  --muted: #6b7280;
  --line: #e5e7eb;
  --green: #14b982;
  --deep: #047857;
}
body {
  margin: 0;
  height: 100vh;
  overflow: hidden;
  background: #fff;
  color: var(--ink);
  font-family: Inter, "Liberation Sans", sans-serif;
}
h1, h2, p { margin: 0; }
a { color: inherit; text-decoration: none; }
button { border: 0; margin: 0; padding: 0; background: none; color: inherit; font: inherit; }
svg { flex: none; }
.defs { display: none; }

/* Top bar */
.topbar {
  position: relative;
  z-index: 2;
  display: flex;
  align-items: center;
  height: 118px;
  padding: 0 32px 4px 10px;
  background: #fff;
  border-bottom: 2px solid var(--line);
}
.brand { display: flex; align-items: center; gap: 5px; }
.brand-mark { width: 70px; height: 34px; }
.brand-name { font-size: 27px; font-weight: 800; letter-spacing: -1px; color: #0d4a42; }
.chip {
  margin-left: 25px;
  padding: 0 16px;
  border-radius: 12px;
  background: #ecfdf5;
  color: var(--deep);
  font-size: 22px;
  font-weight: 700;
  letter-spacing: 1px;
  line-height: 48px;
}
.nav {
  display: flex;
  align-items: center;
  gap: 58px;
  margin-left: auto;
  color: var(--muted);
  font-size: 29px;
}
.with-icon { display: flex; align-items: center; gap: 6px; }
.menu { gap: 10px; }
.ext { padding: 0 20px; }
.ext svg { color: #9ca3af; }
.dot { width: 16px; height: 16px; border-radius: 50%; background: currentColor; }
.account {
  display: flex;
  align-items: center;
  gap: 14px;
  height: 78px;
  margin-top: 4px;
  padding: 0 29px;
  border: 2px solid #d1d5db;
  border-radius: 40px;
  color: #111;
}
.account .dot { background: var(--green); }
.lang {
  display: flex;
  height: 66px;
  margin-left: 72px;
  border: 2px solid var(--line);
  border-radius: 12px;
  overflow: hidden;
  color: var(--muted);
  font-size: 24px;
  font-weight: 700;
}
.lang button { width: 74px; }
.lang .on { background: var(--ink); color: #fff; }

/* Heading */
.page { padding: 0 30px 0 8px; }
.back {
  display: block;
  margin-top: -24px;
  color: var(--deep);
  font-size: 26px;
  font-weight: 600;
  line-height: 32px;
}
.title-row { display: flex; align-items: center; height: 76px; margin-top: 22px; }
h1 { font-size: 67px; font-weight: 800; line-height: 76px; letter-spacing: -1px; }
.icon-btn { display: flex; margin: 8px 0 0 28px; }
.icon-btn.star { margin-left: 42px; }
.btn {
  display: flex;
  align-items: center;
  height: 76px;
  margin-left: 24px;
  border-radius: 38px;
  font-size: 27px;
  font-weight: 600;
}
.share { gap: 12px; margin-left: 37px; padding: 0 31px; background: var(--green); color: #fff; font-weight: 700; box-shadow: 0 4px 16px #14b98240; }
.gpx { gap: 16px; padding: 0 30px; border: 2px solid var(--green); background: #ecfdf5; color: var(--deep); font-weight: 700; }
.garmin { gap: 18px; height: 74px; padding: 0 28px; border: 2px solid #d7dce5; color: #334155; font-size: 26px; }
.out { color: #9ca3af; }
.sub { margin-top: 17px; color: var(--muted); font-size: 32px; line-height: 40px; }
.sub a { padding-bottom: 6px; border-bottom: 2px dashed var(--green); color: var(--deep); font-weight: 600; }
.verdict {
  display: flex;
  align-items: center;
  gap: 12px;
  width: max-content;
  height: 56px;
  margin-top: 32px;
  padding: 0 20px;
  border-radius: 28px;
  background: #dcfce7;
  color: #166534;
  font-size: 25px;
  font-weight: 600;
}

/* Ride controls */
.controls {
  display: grid;
  grid-template-columns: 1fr 1fr 1fr auto;
  gap: 36px;
  align-items: start;
  margin-top: 36px;
  padding-bottom: 59px;
  border-bottom: 2px solid var(--line);
}
.control-head { display: flex; justify-content: space-between; align-items: baseline; height: 40px; padding-top: 5px; line-height: 36px; }
.control-head label { color: var(--muted); font-size: 25px; font-weight: 500; letter-spacing: 1px; }
.control-head output { font-size: 30px; font-weight: 700; }
.slider { position: relative; display: flex; height: 44px; }
.slider input { -webkit-appearance: none; appearance: none; width: 100%; height: 44px; margin: 0; background: none; }
.slider input::-webkit-slider-runnable-track { height: 8px; border-radius: 4px; background: var(--line); }
.slider input::-webkit-slider-thumb {
  -webkit-appearance: none;
  width: 28px;
  height: 44px;
  margin-top: -18px;
  border: 4px solid #fff;
  border-radius: 10px;
  background: linear-gradient(#b6e7d5, #b6e7d5) center / 16px 4px no-repeat var(--green);
  box-shadow: 0 4px 12px #14b98259;
}
.ticks { position: absolute; inset: 14px 0; display: flex; justify-content: space-between; pointer-events: none; }
.ticks i { width: 4px; border-radius: 2px; background: #6b728059; }
.control-foot { display: flex; justify-content: space-between; margin-top: 2px; padding-right: 16px; color: var(--muted); font-size: 24px; line-height: 32px; }
.control-foot button { display: flex; align-items: center; gap: 4px; font-weight: 500; }
.direction { display: flex; height: 91px; padding: 6px; border: 2px solid var(--line); border-radius: 20px; color: var(--muted); font-size: 28px; font-weight: 600; }
.direction button { display: flex; align-items: center; gap: 8px; padding: 0 28px; border-radius: 16px; }
.direction .on { background: var(--green); color: #fff; }

/* Map */
.columns { display: grid; grid-template-columns: 8fr 5fr; gap: 48px; margin-top: 48px; }
.tabs {
  display: flex;
  gap: 8px;
  width: max-content;
  height: 87px;
  padding: 6px;
  border: 2px solid var(--line);
  border-radius: 24px;
  background: #f0f3f9;
  color: var(--muted);
  font-size: 27px;
  font-weight: 600;
}
.tabs button { display: flex; align-items: center; gap: 7px; padding: 0 27px; border-radius: 18px; }
.tabs .on { background: var(--green); color: #fff; box-shadow: 0 2px 8px #14b98240; }
.map {
  position: relative;
  margin-top: 20px;
  border: 2px solid var(--line);
  border-radius: 28px;
  background: #f2f2f0;
  overflow: hidden;
}
.map-art { display: block; width: 100%; height: 860px; }
.map-art path { vector-effect: non-scaling-stroke; }
.urban path { fill: #ededec; }
.park path { fill: #e6e8e6; }
.road path { fill: none; stroke: #e2e2e1; stroke-width: 4; stroke-linejoin: round; }
.road .main { stroke: #dcdcdb; }
.creek path { fill: none; stroke: #bccdd4; stroke-width: 2; stroke-linejoin: round; }
.border { fill: none; stroke: #b4b4b4; stroke-width: 3; stroke-dasharray: 5 4; }
.river { fill: none; stroke: #c1c8cb; stroke-width: 10; stroke-linejoin: round; }
.river.slim { stroke-width: 7; }
.brook { fill: none; stroke: #bccbd2; stroke-width: 3; }
.river-mid { fill: none; stroke: #adadad; stroke-width: 3; stroke-dasharray: 4 4; }
.arm, .arm path { fill: none; stroke: #c1c8cb; stroke-width: 5; }
.arm.thin, .arm.thin path { stroke-width: 2; }
.place text {
  font-family: "Noto Sans", sans-serif;
  fill: #111;
  stroke: #ffffffd0;
  stroke-width: 3px;
  paint-order: stroke;
}
.route path { fill: none; stroke-linejoin: round; stroke-linecap: round; }
.route .wide { stroke-width: 12; }
.route .narrow { stroke-width: 5; }
.route .case { stroke: #fff; }
.route .case.wide { stroke-width: 18; }
.route .case.narrow { stroke-width: 10; }
.route .y { stroke: #fbbf24; }
.route .o { stroke: #f97316; }
.route .g2 { stroke: #22c55e; }
.route .grey { stroke: #dcdcdb; }
.g { fill: #5cb578; opacity: .45; }
.arrow path { fill: #2a2a3c; stroke: #55556a; }
.pill rect { fill: var(--ink); stroke: #ffffffb0; stroke-width: 5px; paint-order: stroke; filter: drop-shadow(0 3px 4px #0002); }
.pill text { fill: #fff; font: 700 23px "Liberation Sans", Arial, sans-serif; text-anchor: middle; }
.satellite {
  position: absolute;
  top: 22px;
  left: 22px;
  display: flex;
  align-items: center;
  gap: 6px;
  height: 70px;
  padding: 0 22px;
  border-radius: 14px;
  background: #fffffff5;
  box-shadow: 0 2px 8px #0003;
  font-size: 27px;
  font-weight: 600;
}
.zoom {
  position: absolute;
  top: 16px;
  right: 16px;
  width: 66px;
  border: 4px solid #0000001a;
  border-radius: 12px;
  background: #fff;
  background-clip: padding-box;
}
.zoom button { display: flex; align-items: center; justify-content: center; width: 100%; height: 58px; }
.zoom button + button { border-top: 2px solid #ddd; }

/* Side column */
.side { display: flex; flex-direction: column; gap: 28px; }
.card { border: 2px solid var(--line); border-radius: 28px; padding: 36px; }
.tip { padding-bottom: 32px; border-color: #86efac; background: linear-gradient(135deg, #f0fdf4, #ecfdf5); }
.tip h2 { color: #15803d; font-size: 23px; font-weight: 700; letter-spacing: 1px; line-height: 30px; }
.tip p { margin-top: 14px; font-size: 32px; line-height: 46px; }
.summary h2 { font-size: 32px; font-weight: 700; line-height: 51px; }
.stats { display: grid; grid-template-columns: 1fr 1fr; gap: 24px; margin-top: 20px; }
.stat { position: relative; display: flex; flex-direction: column; height: 145px; padding: 22px 24px; border-radius: 20px; background: #f9fafc; }
.stat strong { font-size: 48px; font-weight: 800; line-height: 56px; }
.stat span { margin-top: 2px; color: var(--muted); font-size: 24px; line-height: 40px; }
.stat svg { position: absolute; top: 20px; right: 16px; width: 30px; height: 30px; color: #6b7280; }
.good { color: #059669; }
.bad { color: #ef4444; }
```
